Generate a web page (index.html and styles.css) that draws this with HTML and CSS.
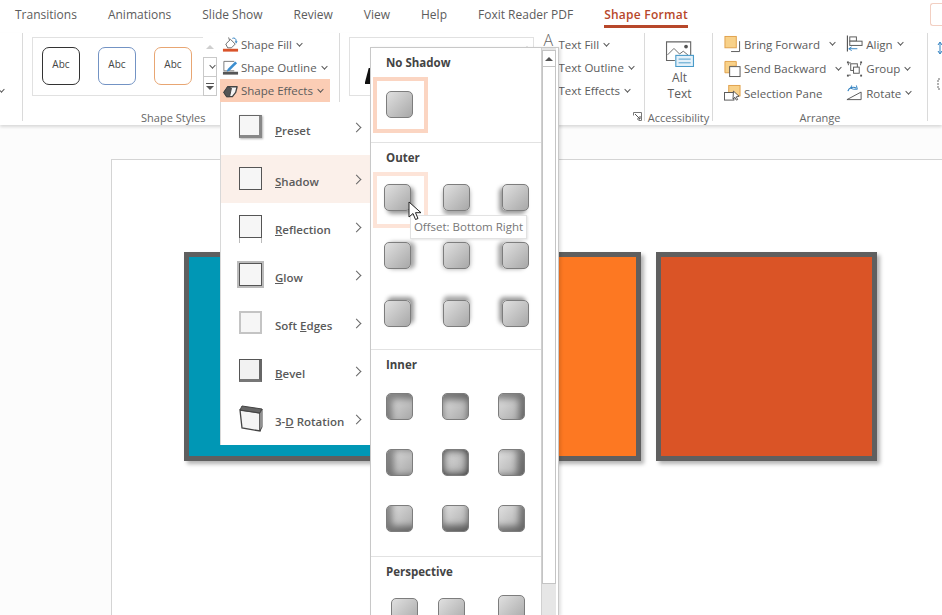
FILE: index.html
```html
<!doctype html>
<html lang="en">
<head>
    <meta charset="UTF-8">
    <title>Shape Format</title>
    <link rel="stylesheet" href="styles.css">
</head>
<body>
<div id="app">
    <ul id="tabs">
        <li>Transitions</li>
        <li>Animations</li>
        <li>Slide Show</li>
        <li>Review</li>
        <li>View</li>
        <li>Help</li>
        <li>Foxit Reader PDF</li>
        <li class="selected">Shape Format</li>
        <li class="share"><span class="share-box"></span></li>
    </ul>

    <div id="ribbon">
        <div class="group group-stub"><span class="caret"></span></div>

        <div class="group group-styles">
            <div class="group-body">
                <div class="style-box">
                    <div class="abc abc-black">Abc</div>
                    <div class="abc abc-blue">Abc</div>
                    <div class="abc abc-orange">Abc</div>
                </div>
                <div class="style-scroll">
                    <div class="scroll-btn"><span class="tri tri-up tri-faint"></span></div>
                    <div class="scroll-btn boxed"><span class="caret"></span></div>
                    <div class="scroll-btn boxed"><span class="more"></span></div>
                </div>
                <div class="cmd-list">
                    <div class="cmd">
                        <svg class="ico" viewBox="0 0 18 18"><path d="M4 8l5-5 5 5-4 4H6z" fill="#fff" stroke="#666"/><path d="M8 4L7 1" stroke="#666"/><path d="M11 2c2-1 4 0 4 3" fill="none" stroke="#2f80c0"/><path d="M13.500 5h3l-1.500 2.500z" fill="#2f80c0"/><rect x="1" y="13" width="16" height="3" fill="#d9532a"/></svg>
                        <span>Shape Fill</span><span class="caret"></span>
                    </div>
                    <div class="cmd">
                        <svg class="ico" viewBox="0 0 18 18"><path d="M2 2h11M2 2v10h11" fill="none" stroke="#777"/><path d="M6 10l8-8 2 2-8 8-3 1z" fill="#3d8fd0"/><rect x="1" y="13" width="16" height="3" fill="#555"/></svg>
                        <span>Shape Outline</span><span class="caret"></span>
                    </div>
                    <div class="cmd cmd-on">
                        <svg class="ico" viewBox="0 0 18 18"><path d="M2 10.500L6 4.500h10l-1.500 6L11 15H5z" fill="#f4f4f4" stroke="#444" stroke-width="1.400" stroke-linejoin="round"/><path d="M2 10.500L6 4.500l4 1.500-2 9H5z" fill="#555" stroke="#444" stroke-linejoin="round"/></svg>
                        <span>Shape Effects</span><span class="caret"></span>
                    </div>
                </div>
            </div>
            <div class="group-label">Shape Styles</div>
        </div>

        <div class="group group-wordart">
            <div class="group-body">
                <div class="art-box"><span class="art-a"></span><span class="tri tri-up tri-faint art-up"></span></div>
                <div class="cmd-list text-list">
                    <div class="cmd"><span class="big-a">A</span><span>Text Fill</span><span class="caret"></span></div>
                    <div class="cmd"><span class="big-a"></span><span>Text Outline</span><span class="caret"></span></div>
                    <div class="cmd"><span class="big-a"></span><span>Text Effects</span><span class="caret"></span></div>
                </div>
            </div>
            <div class="group-label label-end">
                <svg class="launcher" viewBox="0 0 9 9"><path d="M.5 3.500V.5h8v8h-3" fill="none" stroke="#777"/><path d="M2 2l5 5M7 4v3H4" fill="none" stroke="#555"/></svg>
            </div>
        </div>

        <div class="group group-access">
            <div class="group-body alt-body">
                <svg class="alt-ico" viewBox="0 0 31 28"><path d="M10 21H1V1h26v14" fill="#fff" stroke="#666" stroke-width="1.200"/><path d="M2 15l7-7 6 6 4-3 5 4" fill="none" stroke="#666"/><circle cx="22" cy="6" r="2" fill="#555"/><rect x="11" y="15.500" width="19" height="12" fill="#e4f1fa" stroke="#4a9bc9" stroke-width="1.200"/><path d="M14 19.500h13M14 23.500h13" stroke="#4a9bc9"/></svg>
                <div class="alt-text">Alt<br>Text</div>
            </div>
            <div class="group-label">Accessibility</div>
        </div>

        <div class="group group-arrange">
            <div class="group-body arrange-body">
                <div class="cmd-list arrange-col">
                    <div class="cmd">
                        <svg class="ico" viewBox="0 0 18 18"><path d="M16.500 6v11h-9" fill="none" stroke="#555"/><rect x="1" y="1" width="12" height="12" fill="#f8d189" stroke="#e0a04a"/></svg>
                        <span>Bring Forward</span><span class="caret caret-far"></span>
                    </div>
                    <div class="cmd">
                        <svg class="ico" viewBox="0 0 18 18"><path d="M1 13V1h12v5H6v7z" fill="#f8d189" stroke="#e0a04a"/><rect x="6" y="6.500" width="11" height="10.500" fill="#fff" stroke="#555"/></svg>
                        <span>Send Backward</span><span class="caret caret-far"></span>
                    </div>
                    <div class="cmd">
                        <svg class="ico" viewBox="0 0 18 18"><rect x="5" y="1" width="12" height="11" fill="#f8d189" stroke="#e0a04a"/><rect x=".5" y="8.500" width="10" height="8" fill="#fff" stroke="#555"/><path d="M10 7l6 5.500-3 .5 1.500 3-1.500.5-1.500-3-2 2z" fill="#fff" stroke="#333" stroke-width=".8"/></svg>
                        <span>Selection Pane</span>
                    </div>
                </div>
                <div class="cmd-list arrange-col">
                    <div class="cmd">
                        <svg class="ico" viewBox="0 0 18 18"><path d="M1.500 0v17" stroke="#555" stroke-width="1.200"/><rect x="4" y="1.500" width="7" height="4.500" fill="#fff" stroke="#555"/><rect x="4" y="6" width="13" height="4.500" fill="#fff" stroke="#555"/><path d="M12 14H3M6 12l-3 2 3 2" fill="none" stroke="#2f80c0"/></svg>
                        <span>Align</span><span class="caret"></span>
                    </div>
                    <div class="cmd">
                        <svg class="ico" viewBox="0 0 18 18"><path d="M2.500 3v12M15.500 3v12M3 2.500h12M3 15.500h12" fill="none" stroke="#555" stroke-dasharray="2 10"/><rect x="1" y="1" width="2" height="2" fill="#555"/><rect x="15" y="1" width="2" height="2" fill="#555"/><rect x="1" y="15" width="2" height="2" fill="#555"/><rect x="15" y="15" width="2" height="2" fill="#555"/><rect x="5" y="3.500" width="7" height="7" fill="none" stroke="#555"/><rect x="8" y="7" width="6" height="6.500" fill="#fff" stroke="#555"/></svg>
                        <span>Group</span><span class="caret"></span>
                    </div>
                    <div class="cmd">
                        <svg class="ico" viewBox="0 0 18 18"><path d="M1 16L16 8v8z" fill="#fff" stroke="#555"/><path d="M2 7c1-4 6-5 9-3" fill="none" stroke="#2f80c0" stroke-width="1.200"/><path d="M6 1l-1 3 3 1M11 1l1 4-4 0" fill="none" stroke="#2f80c0"/></svg>
                        <span>Rotate</span><span class="caret"></span>
                    </div>
                </div>
            </div>
            <div class="group-label">Arrange</div>
        </div>

        <div class="group group-rest">
            <svg class="rest-ico" viewBox="0 0 14 56"><path d="M12 6v10M10 8l2-3 2 3M10 14l2 3 2-3" fill="none" stroke="#2f80c0"/><path d="M12 42h-2v10h2" fill="none" stroke="#666" stroke-dasharray="2 1"/></svg>
        </div>
    </div>

    <div id="workspace">
        <div id="slide">
            <div class="block block-blue"></div>
            <div class="block block-orange"></div>
            <div class="block block-red"></div>
        </div>
    </div>

    <!-- Shape Effects dropdown -->
    <ul id="menu">
        <li><span class="fx fx-preset"></span><span class="fx-name"><u>P</u>reset</span><span class="chev"></span></li>
        <li class="selected"><span class="fx"></span><span class="fx-name"><u>S</u>hadow</span><span class="chev"></span></li>
        <li><span class="fx fx-reflect"></span><span class="fx-name"><u>R</u>eflection</span><span class="chev"></span></li>
        <li><span class="fx fx-glow"></span><span class="fx-name"><u>G</u>low</span><span class="chev"></span></li>
        <li><span class="fx fx-soft"></span><span class="fx-name">Soft <u>E</u>dges</span><span class="chev"></span></li>
        <li><span class="fx fx-bevel"></span><span class="fx-name"><u>B</u>evel</span><span class="chev"></span></li>
        <li>
            <svg class="fx-3d" viewBox="0 0 24 28"><path d="M1 6l20 3v18L3 24z" fill="#f4f4f4" stroke="#444" stroke-width="1.300"/><path d="M1 6l2-4 20 3-2 4z" fill="#666" stroke="#444"/><path d="M21 9l2-4v18l-2 4z" fill="#ddd" stroke="#444"/></svg>
            <span class="fx-name">3-<u>D</u> Rotation</span><span class="chev"></span>
        </li>
    </ul>

    <!-- Shadow gallery -->
    <div id="gallery">
        <div class="gallery-list">
            <div class="sect sect-none">
                <h4>No Shadow</h4>
                <div class="swatch on-none"></div>
            </div>
            <div class="sect sect-outer">
                <h4>Outer</h4>
                <div class="grid grid-outer">
                    <div class="swatch on-hover out-br"></div>
                    <div class="swatch out-b"></div>
                    <div class="swatch out-bl"></div>
                    <div class="swatch out-r"></div>
                    <div class="swatch out-c"></div>
                    <div class="swatch out-l"></div>
                    <div class="swatch out-tr"></div>
                    <div class="swatch out-t"></div>
                    <div class="swatch out-tl"></div>
                </div>
            </div>
            <div class="sect sect-inner">
                <h4>Inner</h4>
                <div class="grid grid-inner">
                    <div class="swatch in-tl"></div>
                    <div class="swatch in-t"></div>
                    <div class="swatch in-tr"></div>
                    <div class="swatch in-l"></div>
                    <div class="swatch in-c"></div>
                    <div class="swatch in-r"></div>
                    <div class="swatch in-bl"></div>
                    <div class="swatch in-b"></div>
                    <div class="swatch in-br"></div>
                </div>
            </div>
            <div class="sect sect-persp">
                <h4>Perspective</h4>
                <div class="grid grid-persp">
                    <div class="swatch"></div>
                    <div class="swatch"></div>
                    <div class="swatch persp-up"></div>
                </div>
            </div>
        </div>
        <div class="scrollbar">
            <div class="scroll-up"><span class="tri tri-up"></span></div>
            <div class="scroll-thumb"></div>
        </div>
    </div>

    <div id="tooltip">Offset: Bottom Right</div>
    <svg id="cursor" viewBox="0 0 14 20"><path d="M1 1v15l4-3.500 2.500 6 2.500-1-2.500-5.800H13z" fill="#fff" stroke="#222"/></svg>
</div>
</body>
</html>
```

FILE: styles.css
```css
*, *::before, *::after{
    padding: 0;
    margin: 0;
    box-sizing: border-box;
}
li{
    list-style: none;
}
html, body{
    height: 615px;
    overflow: hidden;
}
body{
    background: #fcfcfc;
    color: #5c5c5c;
    font-family: "Open Sans", "Liberation Sans", sans-serif;
    font-size: 12px;
}
#app{
    width: 942px;
    height: 615px;
    position: relative;
    overflow: hidden;
}

/* tabs */
#tabs{
    height: 33px;
    background: #fff;
    display: flex;
    padding-left: 15px;
    font-size: 12px;
}
#tabs li{
    height: 28px;
    line-height: 30px;
    margin-right: 31px;
    white-space: nowrap;
}
#tabs .selected{
    color: #b7472a;
    font-weight: 600;
    letter-spacing: .25px;
    border-bottom: 3px solid #b7472a;
    margin-right: 0;
}
#tabs .share{
    flex: 1;
    margin-right: 0;
    display: flex;
    justify-content: flex-end;
    padding-top: 3px;
}
.share-box{
    width: 12px;
    height: 23px;
    border: 1px solid #f2cfc2;
    border-right: 0;
    border-radius: 3px 0 0 3px;
}

/* ribbon */
#ribbon{
    height: 92px;
    background: #fff;
    display: flex;
    font-size: 11.500px;
    box-shadow: 0 2px 3px rgba(0,0,0,.14);
}
.group{
    height: 88px;
    display: flex;
    flex-direction: column;
    justify-content: space-between;
    border-right: 1px solid #dadada;
}
.group-body{
    display: flex;
    height: 69px;
}
.group-label{
    height: 19px;
    padding-top: 8px;
    line-height: 15px;
    text-align: center;
    font-size: 11px;
    color: #666;
}
.group-stub{
    width: 23px;
    justify-content: flex-start;
}
.group-stub .caret{
    margin: 54px 0 0 -1px;
}
.group-styles{
    width: 317px;
    padding-left: 9px;
}
.group-styles .group-label{
    padding-right: 24px;
}
.group-wordart{
    width: 306px;
    padding-left: 9px;
}
.group-access{
    width: 68px;
}
.group-arrange{
    width: 215px;
}
.group-rest{
    border-right: 0;
    flex: 1;
}
.style-box{
    width: 171px;
    height: 59px;
    margin-top: 4px;
    border: 1px solid #e1e1e1;
    border-right: 0;
    display: flex;
    gap: 18px;
    padding: 9px 0 0 9px;
}
.abc{
    width: 38px;
    height: 38px;
    border: 1.500px solid #333;
    border-radius: 7px;
    text-align: center;
    line-height: 32px;
    font-size: 10px;
    color: #444;
}
.abc-blue{
    border-color: #7393c4;
}
.abc-orange{
    border-color: #e8a673;
}
.style-scroll{
    width: 14px;
    margin-top: 4px;
    display: flex;
    flex-direction: column;
}
.scroll-btn{
    height: 20px;
    display: flex;
    align-items: center;
    justify-content: center;
}
.scroll-btn.boxed{
    border: 1px solid #c9c9c9;
    margin-bottom: -1px;
}
.cmd-list{
    display: flex;
    flex-direction: column;
    margin-left: 3px;
}
.cmd{
    height: 23px;
    display: flex;
    align-items: center;
    padding-left: 2px;
    white-space: nowrap;
}
.cmd-on{
    width: 110px;
    background: #fbcdb5;
}
.ico{
    width: 17px;
    height: 18px;
    margin-right: 2px;
    flex-shrink: 0;
}
.caret{
    display: inline-block;
    width: 5px;
    height: 5px;
    border-right: 1px solid #555;
    border-bottom: 1px solid #555;
    transform: rotate(45deg) scale(.9);
    margin: -3px 0 0 5px;
}
.caret-far{
    margin-left: 10px;
}
.tri{
    width: 0;
    height: 0;
    border-left: 4px solid transparent;
    border-right: 4px solid transparent;
}
.tri-up{
    border-bottom: 4px solid #555;
}
.tri-faint{
    border-bottom-color: #cfcfcf;
}
.more{
    width: 8px;
    height: 6px;
    border-top: 1px solid #555;
    border-bottom: 3px solid transparent;
    position: relative;
}
.more::after{
    content: "";
    position: absolute;
    left: 0;
    top: 2px;
    border-left: 4px solid transparent;
    border-right: 4px solid transparent;
    border-top: 4px solid #555;
}
.art-box{
    width: 185px;
    height: 59px;
    margin-top: 4px;
    border: 1px solid #e1e1e1;
    display: flex;
    justify-content: space-between;
}
.art-a{
    width: 6px;
    height: 16px;
    margin: 30px 0 0 15px;
    background: #111;
    clip-path: polygon(70% 0, 100% 0, 100% 100%, 0 100%);
}
.art-up{
    margin: 8px 2px 0 0;
}
.text-list{
    margin-left: 8px;
}
.big-a{
    width: 14px;
    margin-right: 1px;
    height: 23px;
    font-size: 16px;
    line-height: 20px;
    color: #666;
    font-weight: 300;
    margin-top: -6px;
}
.launcher{
    width: 9px;
    height: 9px;
    margin: 2px 2px 0 0;
}
.label-end{
    display: flex;
    justify-content: flex-end;
}
.alt-body{
    flex-direction: column;
    align-items: center;
    padding: 8px 0 0 2px;
    font-size: 12px;
}
.alt-ico{
    width: 30px;
    height: 27px;
}
.alt-text{
    text-align: center;
    line-height: 16px;
    margin-top: 3px;
}
.arrange-body{
    padding-left: 9px;
}
.arrange-col{
    margin: -1px 0 0 0;
    width: 125px;
    height: 73px;
    justify-content: space-between;
}
.arrange-col .ico{
    margin-right: 3px;
}
.arrange-col + .arrange-col{
    margin-left: 1px;
    padding-left: 2px;
}
.arrange-col .cmd{
    height: 24px;
}

/* slide area */
#workspace{
    height: 490px;
    padding: 34px 0 0 111px;
}
#slide{
    height: 600px;
    background: #fff;
    border-top: 1px solid #d4d4d4;
    border-left: 1px solid #d4d4d4;
    position: relative;
}
.block{
    position: absolute;
    top: 92px;
    width: 221px;
    height: 209px;
    border: 5px solid #5f5f5f;
    box-shadow: 3px 3px 4px rgba(0,0,0,.3);
}
.block-blue{
    left: 72px;
    background: #0097b5;
}
.block-orange{
    left: 308px;
    background: #fd7822;
}
.block-red{
    left: 544px;
    background: #da5426;
}

/* dropdown */
#menu{
    position: absolute;
    left: 220px;
    top: 102px;
    width: 151px;
    height: 343px;
    background: #fff;
    padding-top: 5px;
    border-left: 1px solid #d8d8d8;
    color: #5a5a5a;
    font-weight: 600;
    font-size: 11.500px;
}
#menu li{
    height: 48px;
    padding: 5px 0 0 18px;
    display: flex;
    align-items: center;
}
#menu li:first-child{
    padding: 0 0 2px 18px;
}
#menu .selected{
    background: #fbf0ea;
}
.fx{
    width: 23px;
    height: 23px;
    flex-shrink: 0;
    position: relative;
    border: 1px solid #555;
    background: #f6f6f6;
    margin: -7px 13px 0 0;
}
.fx-preset{
    border-width: 1px 3px 3px 1px;
    border-color: #666 #888 #888 #666;
    box-shadow: 1px 1px 2px rgba(0,0,0,.3);
}
.fx-reflect::after{
    content: "";
    position: absolute;
    left: -1px;
    right: -1px;
    bottom: -6px;
    height: 5px;
    border-left: 1px solid #bbb;
    border-right: 1px solid #bbb;
}
.fx-glow{
    box-shadow: 0 0 0 2px #bbb;
}
.fx-soft{
    border: 2px solid #c4c4c4;
}
.fx-bevel{
    border-width: 1px 3px 3px 1px;
    border-color: #555 #666 #777 #555;
    background: #f2f2f2;
}
.fx-3d{
    width: 24px;
    height: 28px;
    flex-shrink: 0;
    margin: -7px 12px 0 0;
}
.fx-name{
    flex: 1;
    white-space: nowrap;
}
.chev{
    width: 7px;
    height: 7px;
    border-top: 1.500px solid #666;
    border-right: 1.500px solid #666;
    transform: rotate(45deg);
    margin: -5px 11px 0 0;
    flex-shrink: 0;
}

/* gallery */
#gallery{
    position: absolute;
    left: 370px;
    top: 47px;
    width: 189px;
    height: 568px;
    padding-right: 2px;
    background: #fff;
    border: 1px solid #c8c8c8;
    border-bottom: 0;
    box-shadow: 2px 1px 3px rgba(0,0,0,.12);
    display: flex;
}
.gallery-list{
    width: 171px;
}
.sect{
    border-bottom: 1px solid #e2e2e2;
}
.sect h4{
    font-size: 11.500px;
    font-weight: 700;
    line-height: 16px;
    color: #444;
    padding-left: 15px;
}
.sect-none{
    height: 95px;
    padding-top: 7px;
}
.sect-none .swatch{
    margin: 20px 0 0 15px;
}
.sect-outer{
    height: 207px;
    padding-top: 7px;
}
.sect-inner{
    height: 207px;
    padding-top: 7px;
}
.sect-persp{
    border-bottom: 0;
    padding-top: 7px;
}
.grid{
    display: grid;
    grid-template-columns: repeat(3, 27px);
}
.grid-outer{
    margin: 18px 0 0 13px;
    column-gap: 32px;
    row-gap: 31px;
}
.grid-inner{
    margin: 20px 0 0 15px;
    column-gap: 29px;
    row-gap: 29px;
}
.grid-persp{
    grid-template-columns: 47px 60px 27px;
    margin: 18px 0 0 20px;
}
.persp-up{
    margin-top: -3px;
}
.swatch{
    width: 27px;
    height: 27px;
    position: relative;
    border: 1.500px solid #7d7d7d;
    border-radius: 5px;
    background: linear-gradient(135deg, #e0e0e0, #a8a8a8);
}
.on-none::before, .on-hover::before{
    content: "";
    position: absolute;
    width: 55px;
    height: 56px;
    border: 4px solid #fbd5c2;
}
.on-none::before{
    left: -14.500px;
    top: -15.500px;
}
.on-hover::before{
    left: -12.500px;
    top: -13.500px;
    border-color: #fde4d8;
}
.out-br{ box-shadow: 3px 3px 4px rgba(0,0,0,.4); }
.out-b{ box-shadow: 0 4px 4px rgba(0,0,0,.35); }
.out-bl{ box-shadow: -3px 3px 4px rgba(0,0,0,.4); }
.out-r{ box-shadow: 4px 0 4px rgba(0,0,0,.35); }
.out-c{ box-shadow: 0 0 5px rgba(0,0,0,.35); }
.out-l{ box-shadow: -4px 0 4px rgba(0,0,0,.35); }
.out-tr{ box-shadow: 3px -3px 4px rgba(0,0,0,.4); }
.out-t{ box-shadow: 0 -4px 4px rgba(0,0,0,.35); }
.out-tl{ box-shadow: -3px -3px 4px rgba(0,0,0,.4); }
.in-tl{ box-shadow: inset 5px 5px 6px rgba(0,0,0,.4); }
.in-t{ box-shadow: inset 0 6px 6px rgba(0,0,0,.45); }
.in-tr{ box-shadow: inset -5px 5px 6px rgba(0,0,0,.4); }
.in-l{ box-shadow: inset 7px 0 6px rgba(0,0,0,.4); }
.in-c{ box-shadow: inset 0 0 9px rgba(0,0,0,.8); }
.in-r{ box-shadow: inset -7px 0 6px rgba(0,0,0,.4); }
.in-bl{ box-shadow: inset 5px -5px 6px rgba(0,0,0,.4); }
.in-b{ box-shadow: inset 0 -6px 6px rgba(0,0,0,.45); }
.in-br{ box-shadow: inset -5px -5px 6px rgba(0,0,0,.4); }
.scrollbar{
    width: 15px;
    padding-top: 2px;
    background: #e6e6e6;
    border-left: 1px solid #d0d0d0;
}
.scroll-up{
    height: 17px;
    background: #fff;
    border: 1px solid #c4c4c4;
    display: flex;
    align-items: center;
    justify-content: center;
}
.scroll-thumb{
    height: 517px;
    background: #fff;
    border: 1px solid #c4c4c4;
    border-top: 0;
}
#tooltip{
    position: absolute;
    left: 410px;
    top: 215px;
    width: 117px;
    height: 24px;
    background: #fff;
    border: 1px solid #e2e2e2;
    box-shadow: 1px 1px 2px rgba(0,0,0,.1);
    color: #777;
    font-size: 11.500px;
    line-height: 22px;
    text-align: center;
    white-space: nowrap;
}
#cursor{
    position: absolute;
    left: 408px;
    top: 201px;
    width: 14px;
    height: 20px;
}
.rest-ico{
    width: 14px;
    height: 56px;
    margin-top: 4px;
}
```
